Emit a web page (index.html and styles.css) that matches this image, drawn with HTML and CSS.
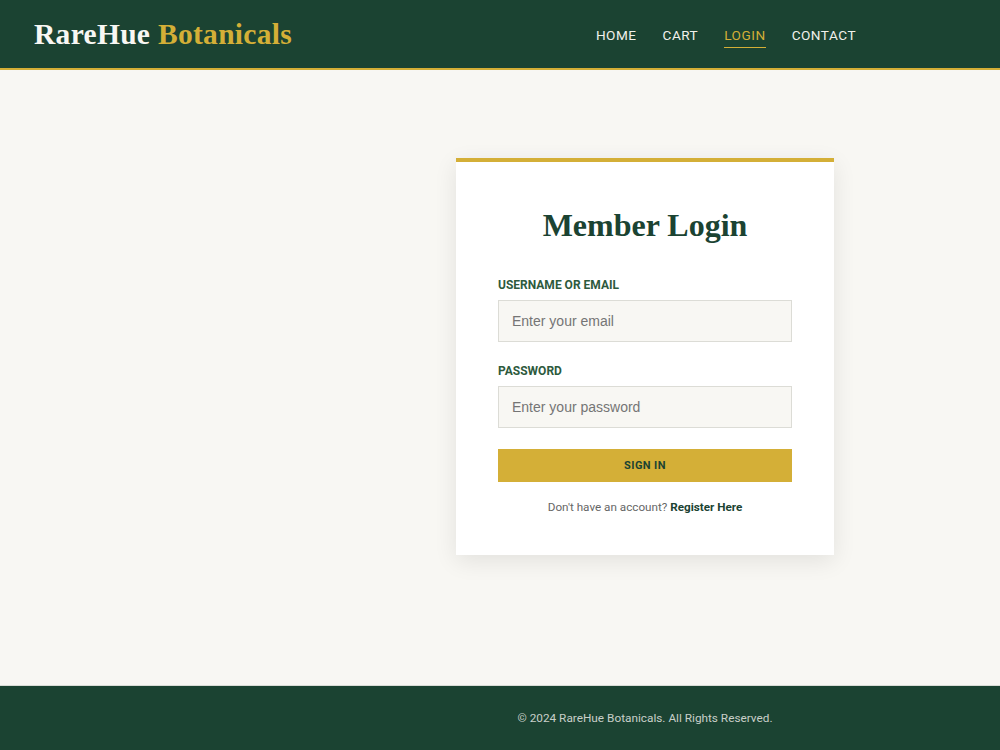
FILE: index.html
```html
<!DOCTYPE html>
<html lang="en">
<head>
<meta charset="utf-8">
<title>Member Login - RareHue Botanicals</title>
<link rel="stylesheet" href="styles.css">
</head>
<body>
<header class="site-header">
  <div class="logo"><span class="logo-main">RareHue</span> <span class="logo-accent">Botanicals</span></div>
  <nav class="nav">
    <a href="#" class="nav-link">HOME</a>
    <a href="#" class="nav-link">CART</a>
    <a href="#" class="nav-link active">LOGIN</a>
    <a href="#" class="nav-link">CONTACT</a>
  </nav>
</header>
<main class="main">
  <section class="card">
    <h1 class="card-title">Member Login</h1>
    <form class="form">
      <label class="field">
        <span class="label">USERNAME OR EMAIL</span>
        <input class="input" type="text" placeholder="Enter your email">
      </label>
      <label class="field">
        <span class="label">PASSWORD</span>
        <input class="input" type="password" placeholder="Enter your password">
      </label>
      <button type="button" class="btn">SIGN IN</button>
    </form>
    <p class="register">Don't have an account? <a href="#" class="register-link">Register Here</a></p>
  </section>
</main>
<footer class="site-footer">
  <p class="copy">© 2024 RareHue Botanicals. All Rights Reserved.</p>
</footer>
</body>
</html>
```
FILE: styles.css
```css
* { box-sizing: border-box; }
html, body { margin: 0; padding: 0; }
body {
  background: #f8f7f3;
  font-family: Roboto, "Liberation Sans", sans-serif;
  color: #333;
  min-height: 750px;
  display: flex;
  flex-direction: column;
}
.site-header {
  height: 70px;
  background: #1b4332;
  border-bottom: 2px solid #d4af37;
  display: flex;
  align-items: center;
  justify-content: space-between;
  padding: 0 144px 0 34px;
}
.logo {
  font-family: "Liberation Serif", "DejaVu Serif", serif;
  font-weight: 700;
  font-size: 29.5px;
  letter-spacing: 0.3px;
  margin-top: 1px;
}
.logo-main { color: #f8f7f3; }
.logo-accent { color: #d4af37; }
.nav {
  display: flex;
  gap: 26px;
  margin-top: 1px;
}
.nav-link {
  color: #f1f1ec;
  text-decoration: none;
  font-size: 13.6px;
  font-weight: 400;
  letter-spacing: 0.5px;
  padding: 6px 0 4px;
  border-bottom: 1px solid transparent;
}
.nav-link.active {
  color: #d4af37;
  border-bottom-color: #d4af37;
}
.main {
  flex: 1;
  display: flex;
  justify-content: center;
  align-items: flex-start;
  padding: 88px 0 0 290px;
}
.card {
  width: 378px;
  background: #fff;
  border-top: 4px solid #d4af37;
  box-shadow: 0 6px 22px rgba(0, 0, 0, 0.09);
  padding: 41px 42px 41px;
}
.card-title {
  margin: 0 0 31px;
  text-align: center;
  font-family: "Liberation Serif", "DejaVu Serif", serif;
  font-weight: 700;
  font-size: 32px;
  line-height: 44px;
  color: #1b4332;
}
.form {
  display: flex;
  flex-direction: column;
}
.field {
  display: flex;
  flex-direction: column;
  margin-bottom: 22px;
}
.field:last-of-type { margin-bottom: 21px; }
.label {
  font-size: 12px;
  font-weight: 700;
  color: #2d5a3d;
  line-height: 14px;
  margin-bottom: 8px;
}
.input {
  height: 42px;
  background: #f8f7f3;
  border: 1px solid #dcdcd6;
  padding: 0 13px;
  font-family: "Liberation Sans", Arial, sans-serif;
  font-size: 14px;
  color: #333;
  outline: none;
}
.input::placeholder { color: #757575; }
.btn {
  height: 33px;
  background: #d4af37;
  border: none;
  color: #1b4332;
  font-family: Roboto, "Liberation Sans", sans-serif;
  font-weight: 700;
  font-size: 11px;
  letter-spacing: 0.4px;
}
.register {
  margin: 18px 0 0;
  text-align: center;
  font-size: 11.7px;
  color: #666;
  line-height: 14px;
}
.register-link {
  color: #1b4332;
  font-weight: 700;
  text-decoration: none;
}
.site-footer {
  height: 65px;
  background: #1b4332;
  border-top: 1px solid #d9dcd6;
  display: flex;
  align-items: center;
  justify-content: center;
  padding-left: 290px;
}
.copy {
  margin: 0;
  font-size: 11.8px;
  color: #c9cfc9;
}
```
